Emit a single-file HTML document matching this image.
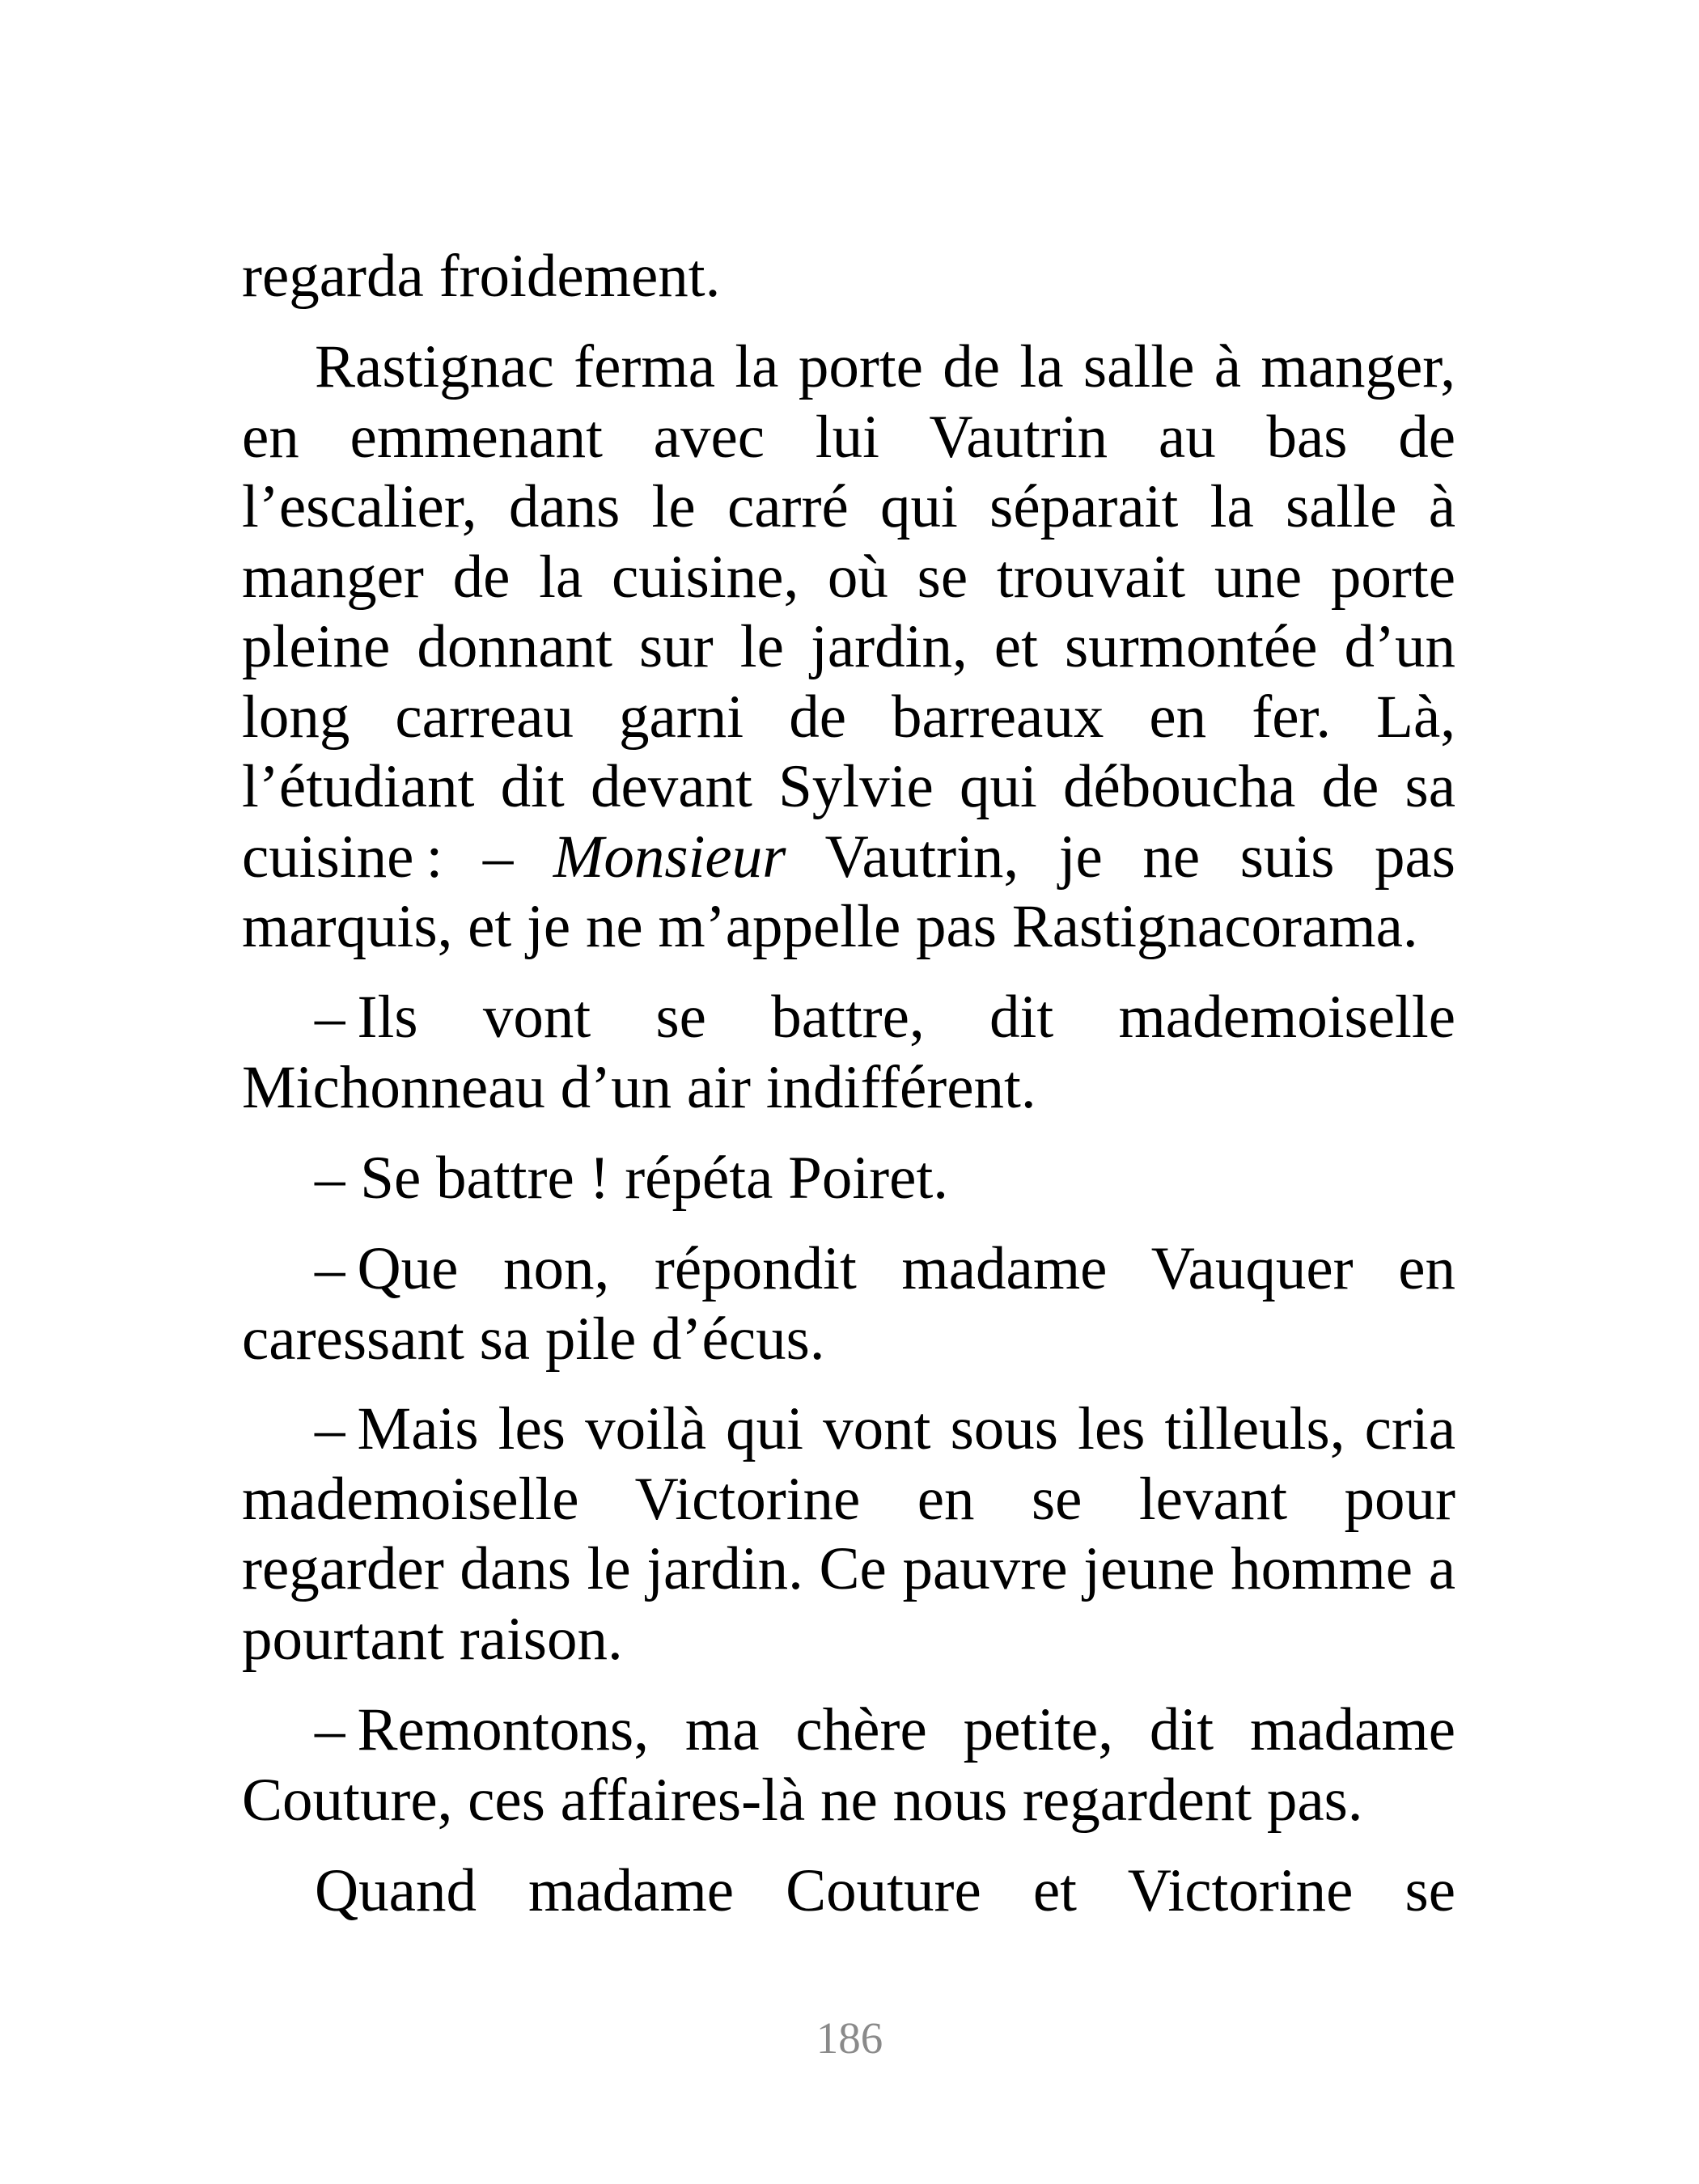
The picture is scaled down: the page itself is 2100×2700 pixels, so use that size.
<!DOCTYPE html>
<html><head><meta charset="utf-8"><style>
html,body{margin:0;padding:0;background:#fff;}
body{width:2100px;height:2700px;position:relative;overflow:hidden;font-family:"Liberation Serif",serif;font-size:75px;color:#000;}
.l{position:absolute;left:299px;width:1500px;height:86.5px;line-height:86.5px;white-space:nowrap;}
.j{text-align:justify;text-align-last:justify;white-space:normal;}
.i{padding-left:90px;box-sizing:border-box;}
.n{display:inline-block;white-space:nowrap;}
.pn{position:absolute;left:0;width:2100px;text-align:center;top:2485px;font-size:55px;line-height:70px;color:#8a8a8a;}
</style></head><body>
<div class="l" style="top:299px">regarda froidement.</div>
<div class="l j i" style="top:411px">Rastignac ferma la porte de la salle à manger,</div>
<div class="l j" style="top:497.5px">en emmenant avec lui Vautrin au bas de</div>
<div class="l j" style="top:584px">l’escalier, dans le carré qui séparait la salle à</div>
<div class="l j" style="top:670.5px">manger de la cuisine, où se trouvait une porte</div>
<div class="l j" style="top:757px">pleine donnant sur le jardin, et surmontée d’un</div>
<div class="l j" style="top:843.5px">long carreau garni de barreaux en fer. Là,</div>
<div class="l j" style="top:930px">l’étudiant dit devant Sylvie qui déboucha de sa</div>
<div class="l j" style="top:1016.5px"><span class="n">cuisine&#8239;:</span> – <i>Monsieur</i> Vautrin, je ne suis pas</div>
<div class="l" style="top:1103px">marquis, et je ne m’appelle pas Rastignacorama.</div>
<div class="l j i" style="top:1215px"><span class="n">–&#8239;Ils</span> vont se battre, dit mademoiselle</div>
<div class="l" style="top:1301.5px">Michonneau d’un air indifférent.</div>
<div class="l i" style="top:1414px">– Se battre ! répéta Poiret.</div>
<div class="l j i" style="top:1526px"><span class="n">–&#8239;Que</span> non, répondit madame Vauquer en</div>
<div class="l" style="top:1612.5px">caressant sa pile d’écus.</div>
<div class="l j i" style="top:1724px"><span class="n">–&#8239;Mais</span> les voilà qui vont sous les tilleuls, cria</div>
<div class="l j" style="top:1810.5px">mademoiselle Victorine en se levant pour</div>
<div class="l j" style="top:1897px">regarder dans le jardin. Ce pauvre jeune homme a</div>
<div class="l" style="top:1983.5px">pourtant raison.</div>
<div class="l j i" style="top:2096px"><span class="n">–&#8239;Remontons,</span> ma chère petite, dit madame</div>
<div class="l" style="top:2182.5px">Couture, ces affaires-là ne nous regardent pas.</div>
<div class="l j i" style="top:2295px">Quand madame Couture et Victorine se</div>
<div class="pn">186</div>
</body></html>
